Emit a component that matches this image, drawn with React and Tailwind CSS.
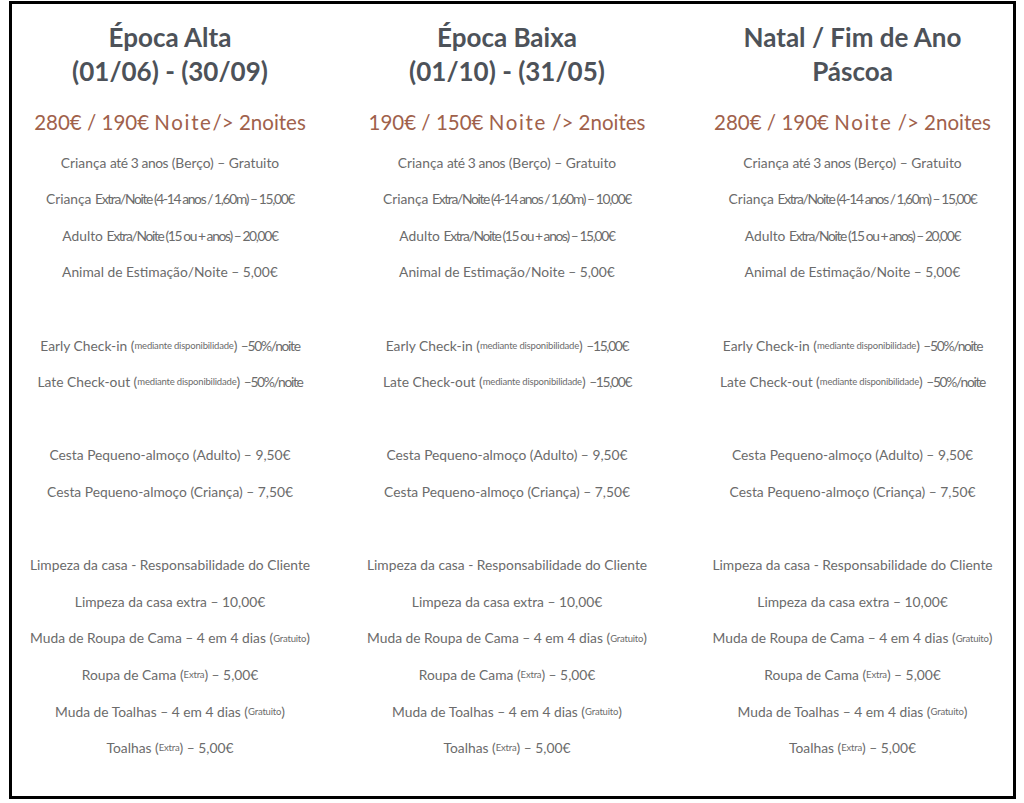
import React from "react";

const S = ({ children }) => <span className="text-[9.5px] tracking-[-0.02em]">{children}</span>;
const T = ({ children }) => (
  <span className="tracking-[-0.095em] [word-spacing:-0.02em]">{children}</span>
);

function cols() {
  return [
    {
      title: ["Época Alta", "(01/06) - (30/09)"],
      price: (
        <>
          280€ / 190€ <span className="tracking-[0.08em]">Noite</span>/&gt; 2noites
        </>
      ),
      child: "15,00€",
      adult: "20,00€",
      early: "–50%/noite",
    },
    {
      title: ["Época Baixa", "(01/10) - (31/05)"],
      price: (
        <>
          190€ / 150€ <span className="tracking-[0.08em]">Noite</span> /&gt; 2noites
        </>
      ),
      child: "10,00€",
      adult: "15,00€",
      early: "–15,00€",
    },
    {
      title: ["Natal / Fim de Ano", "Páscoa"],
      price: (
        <>
          280€ / 190€ <span className="tracking-[0.08em]">Noite</span> /&gt; 2noites
        </>
      ),
      child: "15,00€",
      adult: "20,00€",
      early: "–50%/noite",
    },
  ];
}

function Rows({ c }) {
  const rows = [
    <>
      Criança <span className="tracking-[-0.03em]">até 3 anos</span> (Berço) – Gratuito
    </>,
    <>
      Criança <T>Extra/Noite (4-14 anos / 1,60m) – {c.child}</T>
    </>,
    <>
      Adulto <T>Extra/Noite (15 ou + anos) – {c.adult}</T>
    </>,
    <>Animal de Estimação/Noite – 5,00€</>,
    null,
    <>
      Early Check-in (<S>mediante disponibilidade</S>) <T>{c.early}</T>
    </>,
    <>
      Late Check-out (<S>mediante disponibilidade</S>) <T>{c.early}</T>
    </>,
    null,
    <>Cesta Pequeno-almoço (Adulto) – 9,50€</>,
    <>Cesta Pequeno-almoço (Criança) – 7,50€</>,
    null,
    <>Limpeza da casa - Responsabilidade do Cliente</>,
    <>Limpeza da casa extra – 10,00€</>,
    <>
      Muda de Roupa de Cama – 4 em 4 dias (<S>Gratuito</S>)
    </>,
    <>
      Roupa de Cama (<S>Extra</S>) – 5,00€
    </>,
    <>
      Muda de Toalhas – 4 em 4 dias (<S>Gratuito</S>)
    </>,
    <>
      Toalhas (<S>Extra</S>) – 5,00€
    </>,
  ];
  return (
    <div className="mt-[7.7px] flex flex-col">
      {rows.map((r, i) => (
        <div
          key={i}
          className="h-[36.6px] flex items-center justify-center whitespace-pre text-[13.8px] text-[#6b6b6b]"
        >
          {r}
        </div>
      ))}
    </div>
  );
}

function Column({ c, className }) {
  return (
    <div className={"flex flex-col items-center pt-[16px] " + className}>
      <div className="text-center font-bold text-[26px] leading-[34px] text-[#4d5259]">
        <div>{c.title[0]}</div>
        <div>{c.title[1]}</div>
      </div>
      <div className="mt-[19px] h-[30px] leading-[30px] text-[20.5px] text-[#a0614b] whitespace-pre">
        {c.price}
      </div>
      <Rows c={c} />
    </div>
  );
}

export default function App() {
  const c = cols();
  return (
    <div
      className="w-[1024px] h-[803px] bg-white overflow-hidden"
      style={{ fontFamily: "Lato, 'Open Sans', sans-serif" }}
    >
      <div className="ml-[9px] mt-[1px] w-[1007px] h-[798px] border-[3px] border-black flex">
        <Column c={c[0]} className="w-[316px]" />
        <Column c={c[1]} className="w-[358px]" />
        <Column c={c[2]} className="flex-1 pl-[6px]" />
      </div>
    </div>
  );
}
